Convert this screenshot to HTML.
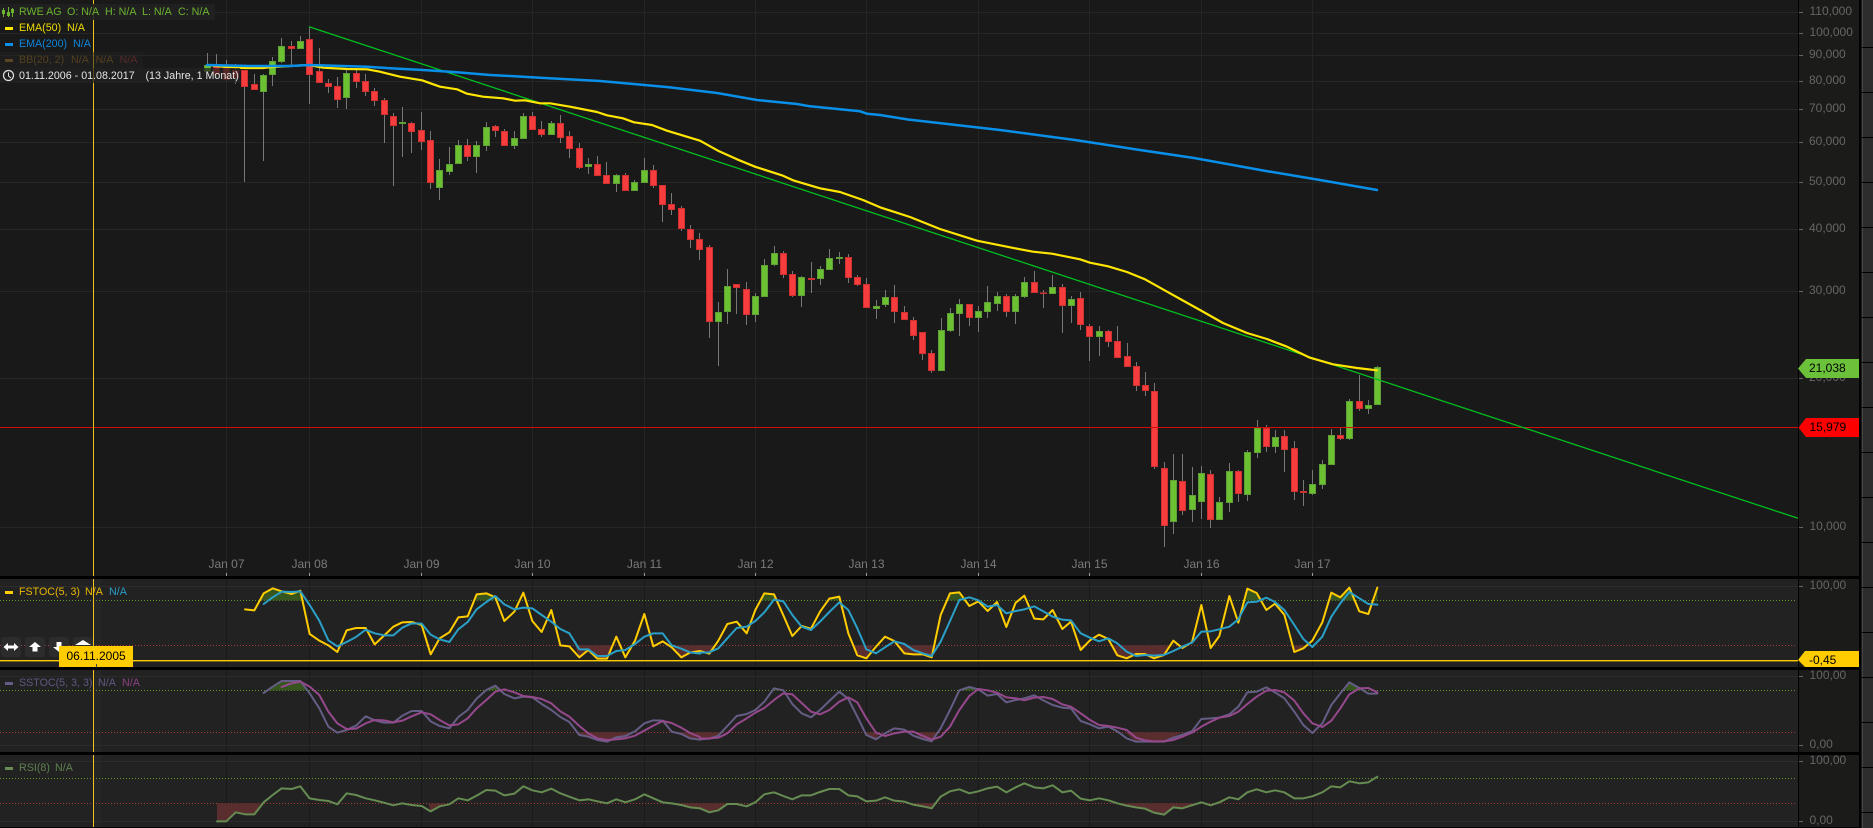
<!DOCTYPE html>
<html><head><meta charset="utf-8"><title>RWE AG Chart</title>
<style>
html,body{margin:0;padding:0;background:#000;width:1873px;height:828px;overflow:hidden}
svg{display:block;font-family:"Liberation Sans",Arial,sans-serif;font-size:12px}
.ax{fill:#666}
.dt{fill:#7a7a7a;text-anchor:middle}
.ln{fill:none;stroke-linejoin:round;stroke-linecap:round}
.lg{font-size:10.7px}
</style></head><body>
<svg width="1873" height="828" viewBox="0 0 1873 828" xmlns="http://www.w3.org/2000/svg">
<!-- backgrounds -->
<rect width="1873" height="828" fill="#000"/>
<rect x="0" y="0" width="1798" height="576" fill="#191919"/>
<rect x="1799" y="0" width="60" height="576" fill="#1b1b19"/>
<rect x="0" y="579" width="1798" height="88" fill="#222"/>
<rect x="0" y="670" width="1798" height="82" fill="#222"/>
<rect x="0" y="755" width="1798" height="72" fill="#222"/>
<rect x="1799" y="579" width="60" height="88" fill="#1b1b19"/>
<rect x="1799" y="670" width="60" height="82" fill="#1b1b19"/>
<rect x="1799" y="755" width="60" height="72" fill="#1b1b19"/>
<rect x="94" y="579" width="7" height="248" fill="#fff" opacity=".018"/>
<!-- right strip -->
<rect x="1861" y="0" width="12" height="828" fill="#1c1c1c"/>
<rect x="1862" y="0" width="11" height="828" fill="#2d2d2d"/>
<rect x="1862" y="0" width="1" height="828" fill="#454545"/>
<path d="M1862 47.5H1873M1862 92.5H1873M1862 137.5H1873M1862 182.5H1873M1862 227.5H1873M1862 272.5H1873M1862 317.5H1873M1862 362.5H1873M1862 407.5H1873M1862 452.5H1873M1862 497.5H1873M1862 542.5H1873M1862 587.5H1873M1862 632.5H1873M1862 677.5H1873M1862 722.5H1873M1862 767.5H1873M1862 812.5H1873" stroke="#000" stroke-width="1"/>
<!-- grid main -->
<path d="M0 12.5H1798M0 33.5H1798M0 55.5H1798M0 81.5H1798M0 109.5H1798M0 142.5H1798M0 182.5H1798M0 229.5H1798M0 291.5H1798M0 378.5H1798M0 527.5H1798" stroke="#262624" stroke-width="1"/>
<path d="M226.5 0V576M309.5 0V576M421.5 0V576M532.5 0V576M644.5 0V576M755.5 0V576M866.5 0V576M978.5 0V576M1089.5 0V576M1201.5 0V576M1312.5 0V576" stroke="#252525" stroke-width="1"/>
<path d="M226.5 573V576M309.5 573V576M421.5 573V576M532.5 573V576M644.5 573V576M755.5 573V576M866.5 573V576M978.5 573V576M1089.5 573V576M1201.5 573V576M1312.5 573V576" stroke="#999" stroke-width="1"/>
<!-- grid lower -->
<path d="M226.5 579V667M309.5 579V667M421.5 579V667M532.5 579V667M644.5 579V667M755.5 579V667M866.5 579V667M978.5 579V667M1089.5 579V667M1201.5 579V667M1312.5 579V667M226.5 670V752M309.5 670V752M421.5 670V752M532.5 670V752M644.5 670V752M755.5 670V752M866.5 670V752M978.5 670V752M1089.5 670V752M1201.5 670V752M1312.5 670V752M226.5 755V827M309.5 755V827M421.5 755V827M532.5 755V827M644.5 755V827M755.5 755V827M866.5 755V827M978.5 755V827M1089.5 755V827M1201.5 755V827M1312.5 755V827" stroke="#191919" stroke-width="1"/>
<path d="M0 586.5H1798M0 676.5H1798M0 745.5H1798M0 761.5H1798M0 821.5H1798" stroke="#2c2c2c" stroke-width="1"/>
<path d="M0 600.5H1797M0 690.5H1797M0 778.5H1797" stroke="#5f9a28" stroke-width="1" stroke-dasharray="1 2"/>
<path d="M0 645.5H1797M0 732.5H1797M0 803.5H1797" stroke="#a83a3a" stroke-width="1" stroke-dasharray="1 2"/>
<!-- date labels -->
<text class="dt" x="226.5" y="568">Jan 07</text><text class="dt" x="309.5" y="568">Jan 08</text><text class="dt" x="421.5" y="568">Jan 09</text><text class="dt" x="532.5" y="568">Jan 10</text><text class="dt" x="644.5" y="568">Jan 11</text><text class="dt" x="755.5" y="568">Jan 12</text><text class="dt" x="866.5" y="568">Jan 13</text><text class="dt" x="978.5" y="568">Jan 14</text><text class="dt" x="1089.5" y="568">Jan 15</text><text class="dt" x="1201.5" y="568">Jan 16</text><text class="dt" x="1312.5" y="568">Jan 17</text>
<!-- wicks -->
<path stroke="#777" stroke-width="1" fill="none" d="M207.5 53V75M216.5 54V78M226.5 60V82M235.5 64V84M244.5 70V182M254.5 74V90M263.5 74V161M272.5 57V86M281.5 38V63M291.5 41V65M300.5 36V49M309.5 27V104M319.5 48V83M328.5 79V93M337.5 77V108M346.5 69V109M356.5 68V88M365.5 74V96M374.5 88V106M384.5 98V143M393.5 113V186M402.5 107V157M411.5 122V153M421.5 112V150M430.5 131V189M439.5 159V200M449.5 147V175M458.5 140V164M467.5 139V161M476.5 141V173M486.5 122V151M495.5 125V137M504.5 129V146M514.5 131V149M523.5 113V139M532.5 112V130M541.5 121V137M551.5 121V135M560.5 115V143M569.5 131V158M579.5 143V169M588.5 158V174M597.5 156V176M606.5 162V184M616.5 174V192M625.5 173V191M634.5 180V191M644.5 158V183M653.5 165V188M662.5 185V222M671.5 193V215M681.5 206V231M690.5 225V248M699.5 233V260M709.5 245V338M718.5 302V366M727.5 269V324M736.5 284V314M746.5 282V325M755.5 293V322M764.5 259V297M774.5 246V266M783.5 251V278M792.5 271V297M801.5 276V307M811.5 262V293M820.5 266V285M829.5 249V270M839.5 252V264M848.5 254V283M857.5 275V286M866.5 278V308M876.5 300V319M885.5 290V307M894.5 285V323M904.5 306V320M913.5 317V340M922.5 332V360M931.5 350V373M941.5 318V371M950.5 308V332M959.5 299V336M969.5 304V326M978.5 306V332M987.5 286V318M997.5 292V311M1006.5 294V317M1015.5 294V324M1024.5 277V298M1034.5 271V293M1043.5 290V308M1052.5 275V294M1062.5 284V333M1071.5 296V323M1080.5 292V330M1089.5 324V361M1099.5 326V356M1108.5 330V347M1117.5 326V358M1127.5 343V367M1136.5 362V391M1145.5 372V396M1154.5 383V469M1164.5 462V547M1173.5 454V534M1182.5 454V515M1192.5 467V522M1201.5 466V519M1210.5 470V528M1219.5 497V520M1229.5 463V512M1238.5 470V502M1247.5 450V501M1257.5 420V458M1266.5 425V452M1275.5 430V453M1284.5 430V472M1294.5 441V500M1303.5 480V506M1312.5 470V495M1322.5 460V489M1331.5 429V465M1340.5 428V440M1349.5 399V440M1359.5 375V411M1368.5 400V414M1377.5 366V405"/>
<!-- green bodies -->
<path fill="#6cc133" stroke="#5f9f35" stroke-width="1" d="M204.5 65.5h6V71.5h-6zM260.5 75.5h6V91.5h-6zM269.5 61.5h6V74.5h-6zM278.5 46.5h6V61.5h-6zM297.5 41.5h6V48.5h-6zM343.5 73.5h6V97.5h-6zM399.5 122.5h6V123.5h-6zM436.5 170.5h6V187.5h-6zM446.5 164.5h6V171.5h-6zM455.5 145.5h6V163.5h-6zM473.5 145.5h6V156.5h-6zM483.5 127.5h6V145.5h-6zM511.5 138.5h6V145.5h-6zM520.5 116.5h6V138.5h-6zM548.5 123.5h6V134.5h-6zM585.5 164.5h6V166.5h-6zM613.5 175.5h6V183.5h-6zM631.5 182.5h6V190.5h-6zM641.5 170.5h6V182.5h-6zM715.5 312.5h6V321.5h-6zM724.5 286.5h6V311.5h-6zM752.5 296.5h6V314.5h-6zM761.5 265.5h6V296.5h-6zM771.5 253.5h6V264.5h-6zM798.5 277.5h6V295.5h-6zM817.5 269.5h6V278.5h-6zM826.5 258.5h6V269.5h-6zM836.5 257.5h6V258.5h-6zM873.5 306.5h6V308.5h-6zM882.5 297.5h6V304.5h-6zM938.5 330.5h6V370.5h-6zM947.5 313.5h6V330.5h-6zM956.5 304.5h6V313.5h-6zM975.5 311.5h6V317.5h-6zM984.5 302.5h6V311.5h-6zM994.5 296.5h6V303.5h-6zM1012.5 296.5h6V311.5h-6zM1021.5 282.5h6V296.5h-6zM1049.5 287.5h6V293.5h-6zM1068.5 299.5h6V305.5h-6zM1096.5 331.5h6V336.5h-6zM1170.5 480.5h6V521.5h-6zM1189.5 495.5h6V509.5h-6zM1198.5 473.5h6V501.5h-6zM1216.5 502.5h6V519.5h-6zM1226.5 471.5h6V502.5h-6zM1244.5 452.5h6V494.5h-6zM1254.5 428.5h6V452.5h-6zM1272.5 437.5h6V446.5h-6zM1309.5 484.5h6V493.5h-6zM1319.5 464.5h6V484.5h-6zM1328.5 435.5h6V464.5h-6zM1346.5 401.5h6V438.5h-6zM1365.5 405.5h6V408.5h-6zM1374.5 367.5h6V404.5h-6z"/>
<!-- red bodies -->
<path fill="#f63c3c" stroke="#cf3030" stroke-width="1" d="M213.5 66.5h6V74.5h-6zM223.5 67.5h6V79.5h-6zM232.5 70.5h6V77.5h-6zM241.5 70.5h6V86.5h-6zM251.5 84.5h6V89.5h-6zM288.5 46.5h6V48.5h-6zM306.5 39.5h6V74.5h-6zM316.5 71.5h6V82.5h-6zM325.5 83.5h6V86.5h-6zM334.5 86.5h6V99.5h-6zM353.5 73.5h6V81.5h-6zM362.5 81.5h6V91.5h-6zM371.5 91.5h6V100.5h-6zM381.5 100.5h6V114.5h-6zM390.5 116.5h6V125.5h-6zM408.5 123.5h6V131.5h-6zM418.5 130.5h6V141.5h-6zM427.5 140.5h6V182.5h-6zM464.5 145.5h6V156.5h-6zM492.5 126.5h6V130.5h-6zM501.5 131.5h6V145.5h-6zM529.5 116.5h6V129.5h-6zM538.5 129.5h6V134.5h-6zM557.5 123.5h6V137.5h-6zM566.5 136.5h6V148.5h-6zM576.5 148.5h6V167.5h-6zM594.5 164.5h6V175.5h-6zM603.5 175.5h6V183.5h-6zM622.5 175.5h6V190.5h-6zM650.5 170.5h6V185.5h-6zM659.5 185.5h6V204.5h-6zM668.5 204.5h6V209.5h-6zM678.5 208.5h6V228.5h-6zM687.5 229.5h6V239.5h-6zM696.5 239.5h6V249.5h-6zM706.5 247.5h6V321.5h-6zM733.5 284.5h6V287.5h-6zM743.5 289.5h6V314.5h-6zM780.5 253.5h6V274.5h-6zM789.5 274.5h6V295.5h-6zM808.5 278.5h6V279.5h-6zM845.5 257.5h6V277.5h-6zM854.5 277.5h6V284.5h-6zM863.5 284.5h6V307.5h-6zM891.5 297.5h6V311.5h-6zM901.5 312.5h6V319.5h-6zM910.5 320.5h6V335.5h-6zM919.5 332.5h6V353.5h-6zM928.5 353.5h6V370.5h-6zM966.5 304.5h6V317.5h-6zM1003.5 296.5h6V311.5h-6zM1031.5 282.5h6V292.5h-6zM1040.5 293h6V293.5h-6zM1059.5 287.5h6V305.5h-6zM1077.5 298.5h6V324.5h-6zM1086.5 326.5h6V336.5h-6zM1105.5 331.5h6V341.5h-6zM1114.5 341.5h6V357.5h-6zM1124.5 356.5h6V366.5h-6zM1133.5 366.5h6V385.5h-6zM1142.5 385.5h6V390.5h-6zM1151.5 391.5h6V466.5h-6zM1161.5 468.5h6V525.5h-6zM1179.5 481.5h6V510.5h-6zM1207.5 474.5h6V519.5h-6zM1235.5 471.5h6V493.5h-6zM1263.5 428.5h6V446.5h-6zM1281.5 436.5h6V449.5h-6zM1291.5 448.5h6V491.5h-6zM1300.5 491.5h6V492.5h-6zM1337.5 435.5h6V438.5h-6zM1356.5 401.5h6V408.5h-6z"/>
<!-- horizontal red line + trendline -->
<rect x="0" y="427" width="1798" height="1" fill="#d80a0a"/>
<line x1="309" y1="26.7" x2="1798" y2="518.3" stroke="#00bf1e" stroke-width="1.3"/>
<!-- EMA50 -->
<polyline class="ln" stroke="#ffe600" stroke-width="2.2" points="207,65 226,67 245,68 263,68 272,67 290,66 309,65 323,67.7 347,69 367,69.3 380,71.7 400,76.7 422,80.3 440,86.7 457,89.3 467,93.7 483,96.7 503,98.3 515,100.7 525,100.3 540,103.3 550,103.3 570,106.7 597,112 607,115.3 623,118.3 634,122.3 652,125 667,130.7 700,140.7 718,150.7 737,159.3 755,166.7 783,175.7 793,180.3 820,188.3 840,192 863,200 880,207.3 910,217 940,229 977,240.7 1015,248.3 1033,251.7 1052,253.7 1080,259.3 1090,262.7 1108,266.3 1127,272 1145,279.3 1170,293.3 1182,300 1200,310 1223,323 1247,333 1267,339 1287,346.7 1310,357.7 1333,364.3 1357,368 1377,370.3"/>
<!-- EMA200 -->
<polyline class="ln" stroke="#0a8fe8" stroke-width="2.5" points="207,65 250,66 290,66 309,65 367,66.7 390,68.3 423,70 457,72.3 490,75 523,76.7 540,77.7 600,81 669,87.2 717,93 757,100 797,104 810,106.3 860,111.3 867,113.7 880,115 908,119.5 1000,130 1075,140 1140,150 1194,158 1266,171 1320,180 1377,190"/>
<!-- FSTOC fills -->
<g transform="translate(200 570) scale(.33333)"><path fill="#37551f" d="M182 91L191 70 218 55 245 64 275 72 301 62 310 91zM822 91L830 73 859 70 886 82 880 91z"/><path fill="#5a2e2e" d="M1125 226L1138 262 1165 240 1192 266 1221 266 1235 226zM1415 226L1444 262 1470 248 1500 243V226z"/></g>
<g transform="translate(700 570) scale(.33333)"><path fill="#37551f" d="M180 91L193 70 222 73 228 91zM384 91L388 86 418 80 419 91zM745 91L750 70 778 67 788 91z"/><path fill="#5a2e2e" d="M0 226V243L28 251 45 226zM462 226L472 256 499 265 520 226zM590 226L613 250 640 253 668 253 695 262 708 226zM1137 226L1142 240 1150 226zM1235 226L1252 256 1280 265 1308 252 1335 252 1362 265 1392 255 1410 226z"/></g>
<g transform="translate(1100 570) scale(.33333)"><path fill="#37551f" d="M438 91L442 56 470 69 482 91zM688 91L694 68 721 82 748 53 760 91zM825 91L832 53V91z"/><path fill="#5a2e2e" d="M576 226L583 246 610 235 620 226z"/></g>
<!-- SSTOC fills -->
<g transform="translate(200 570) scale(.33333)"><path fill="#37551f" d="M205 361L218 350 245 333 301 333 318 361zM860 361L886 347 905 361z"/><path fill="#5a2e2e" d="M1130 487L1138 495 1192 510 1221 515 1249 508 1276 505 1300 487zM1420 487L1444 492 1470 505 1500 509V487z"/></g>
<g transform="translate(700 570) scale(.33333)"><path fill="#37551f" d="M215 361L222 355 250 361zM778 361L808 351 835 358 840 361z"/><path fill="#5a2e2e" d="M0 487V508L55 503 62 487zM495 487L499 495 528 508 540 487zM640 487L668 507 695 514 715 487zM1275 487L1308 515 1392 515 1447 487z"/></g>
<g transform="translate(1100 570) scale(.33333)"><path fill="#37551f" d="M735 361L748 337 778 354 790 361z"/></g>
<!-- RSI fills -->
<g transform="translate(200 570) scale(.33333)"><path fill="#5a2e2e" d="M51 700V754H79L107 727 135 733 163 733 182 700zM685 700L692 724 719 709 735 700zM1415 700L1444 705 1470 712 1500 715V700z"/></g>
<g transform="translate(700 570) scale(.33333)"><path fill="#5a2e2e" d="M0 700V715L28 727 55 721 77 700zM640 700L668 709 695 715 700 700zM1250 700L1308 712 1335 716 1362 728 1392 734 1420 712 1447 715 1475 706 1490 700z"/></g>
<!-- indicator lines section 1 -->
<g class="ln" stroke-width="6" fill="none" transform="translate(200 570) scale(.33333)">
<polyline stroke="#ffcc00" points="135,118 163,121 191,70 218,55 245,64 275,72 301,62 329,192 358,212 385,226 412,246 440,181 468,174 497,174 524,223 552,197 580,170 607,157 635,156 665,165 692,253 719,205 748,187 775,142 803,139 830,73 859,70 886,82 913,153 943,125 970,68 997,153 1025,186 1054,120 1081,226 1108,229 1138,262 1165,240 1192,266 1221,266 1249,200 1276,262 1305,212 1333,132 1360,229 1388,214 1415,232 1444,262 1470,248 1500,243"/>
<polyline stroke="#2aa0c8" points="191,102 218,82 245,65 275,66 301,64 329,105 358,152 385,211 412,229 440,216 468,201 497,179 524,190 552,196 580,196 607,173 635,160 665,161 692,194 719,208 748,216 775,178 803,156 830,118 859,96 886,78 913,103 943,118 970,113 997,115 1025,135 1054,155 1081,177 1108,190 1138,238 1165,238 1192,258 1221,258 1249,243 1276,240 1305,222 1333,200 1360,190 1388,190 1415,226 1444,236 1470,247 1500,251"/>
<polyline stroke="#655d85" points="191,369 218,350 245,333 275,333 301,333 329,370 358,415 385,470 412,488 440,480 468,467 497,439 524,451 552,458 580,458 607,437 635,423 665,423 692,454 719,468 748,475 775,441 803,420 830,386 859,360 886,347 913,372 943,385 970,380 997,382 1025,402 1054,420 1081,441 1108,456 1138,495 1165,500 1192,510 1221,515 1249,502 1276,498 1305,484 1333,460 1360,451 1388,452 1415,485 1444,492 1470,505 1500,509"/>
<polyline stroke="#96488c" points="245,351 275,340 301,335 329,350 358,375 385,425 412,460 440,477 468,476 497,460 524,450 552,451 580,457 607,452 635,439 665,427 692,433 719,450 748,466 775,463 803,445 830,415 859,390 886,365 913,358 943,367 970,378 997,381 1025,387 1054,400 1081,424 1108,440 1138,468 1165,490 1192,505 1221,510 1249,508 1276,505 1305,497 1333,482 1360,467 1388,453 1415,459 1444,473 1470,489 1500,501"/>
<polyline stroke="#668c52" points="51,754 79,754 107,727 135,733 163,733 191,697 218,675 245,655 275,657 301,649 329,685 358,690 385,693 412,703 440,670 468,675 497,685 524,691 552,698 580,706 607,700 635,705 665,708 692,724 719,709 748,703 775,685 803,691 830,677 859,660 886,662 913,676 943,671 970,649 997,661 1025,667 1054,656 1081,670 1108,680 1138,691 1165,688 1192,694 1221,700 1249,688 1276,697 1305,688 1333,673 1360,685 1388,697 1415,700 1444,705 1470,712 1500,715"/>
</g>
<!-- section 2 -->
<g class="ln" stroke-width="6" fill="none" transform="translate(700 570) scale(.33333)">
<polyline stroke="#ffcc00" points="0,243 28,251 55,212 82,162 110,155 140,190 166,120 193,70 222,73 250,136 277,198 305,168 333,176 360,125 388,86 418,80 445,190 472,256 499,265 528,230 555,200 583,213 613,250 640,253 668,253 695,262 722,135 750,70 778,67 808,108 835,94 863,123 891,96 919,171 947,98 973,77 1003,146 1030,148 1058,120 1087,177 1113,155 1142,240 1170,211 1197,194 1225,207 1252,256 1280,265 1308,252 1335,252 1362,265 1392,255 1420,212 1447,234 1475,217"/>
<polyline stroke="#2aa0c8" points="0,248 28,247 55,235 82,205 110,174 140,170 166,153 193,127 222,89 250,94 277,135 305,170 333,180 360,155 388,126 418,97 445,120 472,175 499,238 528,250 555,232 583,214 613,222 640,240 668,250 695,258 722,215 750,153 778,90 808,82 835,91 863,110 891,105 919,130 947,123 973,118 1003,109 1030,124 1058,140 1087,149 1113,151 1142,190 1170,203 1197,214 1225,205 1252,220 1280,245 1308,258 1335,255 1362,257 1392,255 1420,243 1447,230 1475,218"/>
<polyline stroke="#655d85" points="0,508 28,506 55,497 82,468 110,438 140,432 166,420 193,395 222,355 250,361 277,402 305,430 333,442 360,420 388,393 418,365 445,387 472,440 499,495 528,508 555,490 583,475 613,479 640,497 668,507 695,514 722,475 750,420 778,361 808,351 835,358 863,377 891,372 919,397 947,390 973,385 1003,376 1030,391 1058,405 1087,413 1113,415 1142,453 1170,463 1197,475 1225,470 1252,484 1280,505 1308,515 1335,515 1362,515 1392,515 1420,503 1447,494 1475,484"/>
<polyline stroke="#96488c" points="0,506 28,505 55,503 82,490 110,463 140,445 166,428 193,414 222,390 250,370 277,373 305,399 333,425 360,433 388,420 418,395 445,382 472,397 499,445 528,488 555,498 583,490 613,485 640,485 668,497 695,509 722,500 750,470 778,420 808,378 835,357 863,361 891,368 919,382 947,385 973,391 1003,383 1030,381 1058,387 1087,403 1113,410 1142,430 1170,450 1197,465 1225,468 1252,473 1280,480 1308,503 1335,511 1362,514 1392,514 1420,510 1447,500 1475,488"/>
<polyline stroke="#668c52" points="0,715 28,727 55,721 82,702 110,702 140,709 166,697 193,673 222,667 250,678 277,688 305,676 333,676 360,666 388,657 418,657 445,676 472,679 499,694 528,692 555,682 583,692 613,695 640,704 668,709 695,715 722,680 750,664 778,658 808,670 835,664 863,655 891,650 919,667 947,652 973,640 1003,652 1030,655 1058,646 1087,667 1113,662 1142,686 1170,691 1197,685 1225,691 1252,700 1280,707 1308,712 1335,716 1362,728 1392,734 1420,712 1447,715 1475,706"/>
</g>
<!-- section 3 -->
<g class="ln" stroke-width="6" fill="none" transform="translate(1100 570) scale(.33333)">
<polyline stroke="#ffcc00" points="276,217 304,105 332,234 358,198 388,78 415,158 442,56 470,69 499,120 525,101 553,134 583,246 610,235 637,212 667,157 694,68 721,82 748,53 778,124 805,132 832,53"/>
<polyline stroke="#2aa0c8" points="276,218 304,185 332,184 358,178 388,170 415,148 442,97 470,95 499,83 525,96 553,120 583,165 610,207 637,231 667,200 694,140 721,100 748,66 778,85 805,102 832,104"/>
<polyline stroke="#655d85" points="276,484 304,447 332,445 358,443 388,433 415,410 442,367 470,365 499,352 525,367 553,385 583,425 610,465 637,489 667,460 694,405 721,370 748,337 778,354 805,371 832,371"/>
<polyline stroke="#96488c" points="276,488 304,470 332,455 358,443 388,438 415,425 442,402 470,380 499,362 525,360 553,367 583,392 610,430 637,460 667,471 694,452 721,415 748,373 778,355 805,354 832,367"/>
<polyline stroke="#668c52" points="276,706 304,697 332,706 358,697 388,682 415,688 442,667 470,658 499,667 525,661 553,667 583,685 610,685 637,679 667,667 694,649 721,652 748,634 778,640 805,637 832,620"/>
</g>
<!-- FSTOC last value line -->
<rect x="0" y="660" width="1798" height="1.4" fill="#ffcc00"/>
<!-- crosshair vertical -->
<rect x="93" y="0" width="1" height="827" fill="#f2c21a"/>
<!-- axis line -->
<rect x="1798" y="0" width="1" height="576" fill="#000"/>
<rect x="1798" y="579" width="1" height="248" fill="#000"/>
<rect x="1859" y="0" width="2" height="828" fill="#000"/>
<!-- band separators -->
<rect x="0" y="576" width="1859" height="3" fill="#000"/>
<rect x="0" y="667" width="1859" height="3" fill="#000"/>
<rect x="0" y="752" width="1859" height="3" fill="#000"/>
<rect x="0" y="827" width="1859" height="1" fill="#000"/>
<!-- axis ticks -->
<path d="M1799 12.5h4M1799 33.5h4M1799 55.5h4M1799 81.5h4M1799 109.5h4M1799 142.5h4M1799 182.5h4M1799 229.5h4M1799 291.5h4M1799 378.5h4M1799 527.5h4M1799 586.5h4M1799 676.5h4M1799 745.5h4M1799 761.5h4M1799 821.5h4" stroke="#666" stroke-width="1"/>
<!-- axis labels -->
<text class="ax" x="1809.5" y="15">110,000</text><text class="ax" x="1809.5" y="36">100,000</text><text class="ax" x="1809" y="58">90,000</text><text class="ax" x="1809" y="84">80,000</text><text class="ax" x="1809" y="112">70,000</text><text class="ax" x="1809" y="145">60,000</text><text class="ax" x="1809" y="185">50,000</text><text class="ax" x="1809" y="232">40,000</text><text class="ax" x="1809" y="294">30,000</text><text class="ax" x="1809" y="381">20,000</text><text class="ax" x="1809.5" y="530">10,000</text>
<text class="ax" x="1809.5" y="589">100,00</text><text class="ax" x="1809.5" y="679">100,00</text><text class="ax" x="1809.5" y="748">0,00</text><text class="ax" x="1809.5" y="764">100,00</text><text class="ax" x="1809.5" y="824">0,00</text>
<!-- price tags -->
<path d="M1798 368.5L1806 359H1859V378H1806z" fill="#6cc13a"/><text x="1809" y="372" fill="#000">21,038</text>
<path d="M1798.5 427.5L1806 418H1859V437H1806z" fill="#f00"/><text x="1809.5" y="431" fill="#000">15,979</text>
<path d="M1798 660L1805 651H1859V667H1805z" fill="#ffcc00"/><text x="1809" y="664" fill="#000">-0,45</text>
<!-- legends main -->
<rect x="0" y="4" width="215" height="16" fill="#212121" opacity=".9"/>
<rect x="0" y="52" width="143" height="16" fill="#212121" opacity=".55"/>
<rect x="0" y="68" width="240" height="15" fill="#212121" opacity=".75"/>
<g stroke="#6cb32f" stroke-width="1" fill="none"><path d="M3.5 8V17M8.5 7V17M12.5 8V17"/><rect x="2.5" y="10.5" width="2" height="3"/><rect x="7.5" y="12.5" width="2" height="3"/><rect x="11.5" y="9.5" width="2" height="3"/></g>
<g class="lg" fill="#6cb32f"><text x="19" y="15">RWE AG</text><text x="67" y="15">O: N/A</text><text x="105" y="15">H: N/A</text><text x="142" y="15">L: N/A</text><text x="178" y="15">C: N/A</text></g>
<rect x="5" y="27" width="8" height="3" fill="#ffe600"/>
<g class="lg" fill="#eedc00"><text x="19" y="31">EMA(50)</text><text x="67" y="31">N/A</text></g>
<rect x="5" y="43" width="8" height="3" fill="#0a8fe8"/>
<g class="lg" fill="#0a86dc"><text x="19" y="47">EMA(200)</text><text x="73" y="47">N/A</text></g>
<rect x="5" y="59" width="8" height="3" fill="#5a4522"/>
<g class="lg" fill="#54401f"><text x="19" y="63">BB(20, 2)</text><text x="71" y="63">N/A</text><text x="95.5" y="63">N/A</text></g><text class="lg" x="119.5" y="63" fill="#562a2a">N/A</text>
<circle cx="8.5" cy="75.5" r="5" fill="none" stroke="#e0e0e0" stroke-width="1.2"/><path d="M8.5 72.5V76L11 78" fill="none" stroke="#e0e0e0" stroke-width="1"/>
<g class="lg" fill="#e4e4e4"><text x="19" y="79">01.11.2006 - 01.08.2017</text><text x="145.5" y="79">(13 Jahre, 1 Monat)</text></g>
<!-- legends lower -->
<rect x="5" y="591" width="8" height="3" fill="#ffcc00"/>
<g class="lg" fill="#e8b800"><text x="19" y="595">FSTOC(5, 3)</text><text x="85" y="595">N/A</text></g><text class="lg" x="109" y="595" fill="#2aa0c8">N/A</text>
<rect x="5" y="682" width="8" height="3" fill="#655d85"/>
<g class="lg" fill="#5f5880"><text x="19" y="686">SSTOC(5, 3, 3)</text><text x="98" y="686">N/A</text></g><text class="lg" x="122" y="686" fill="#8a4080">N/A</text>
<rect x="5" y="767" width="8" height="3" fill="#668c52"/>
<g class="lg" fill="#5f8050"><text x="19" y="771">RSI(8)</text><text x="55" y="771">N/A</text></g>
<!-- buttons -->
<g fill="#2c2c2c"><rect x="1" y="637" width="20" height="20" rx="3"/><rect x="25" y="637" width="20" height="20" rx="3"/><rect x="49" y="637" width="20" height="20" rx="3"/><rect x="73" y="637" width="20" height="20" rx="3"/></g>
<g fill="#fff"><path d="M3.5 647l4.5-4v2.5h6V643l4.5 4-4.5 4v-2.5H8v2.5z"/><path d="M35 642l6 5h-3.5v4.5h-5V647H29z"/><path d="M59 652l-6-5h3.5v-5h5v5H65z"/><path d="M83 640l8 5H75z"/><rect x="77" y="646" width="12" height="3"/></g>
<rect x="93" y="637" width="1" height="20" fill="#f2c21a"/>
<!-- date tag -->
<rect x="59" y="646" width="74" height="21" fill="#ffcc00"/>
<text x="66.5" y="660" fill="#000">06.11.2005</text>
<rect x="96" y="664" width="1" height="3" fill="#444"/>
</svg>
</body></html>
